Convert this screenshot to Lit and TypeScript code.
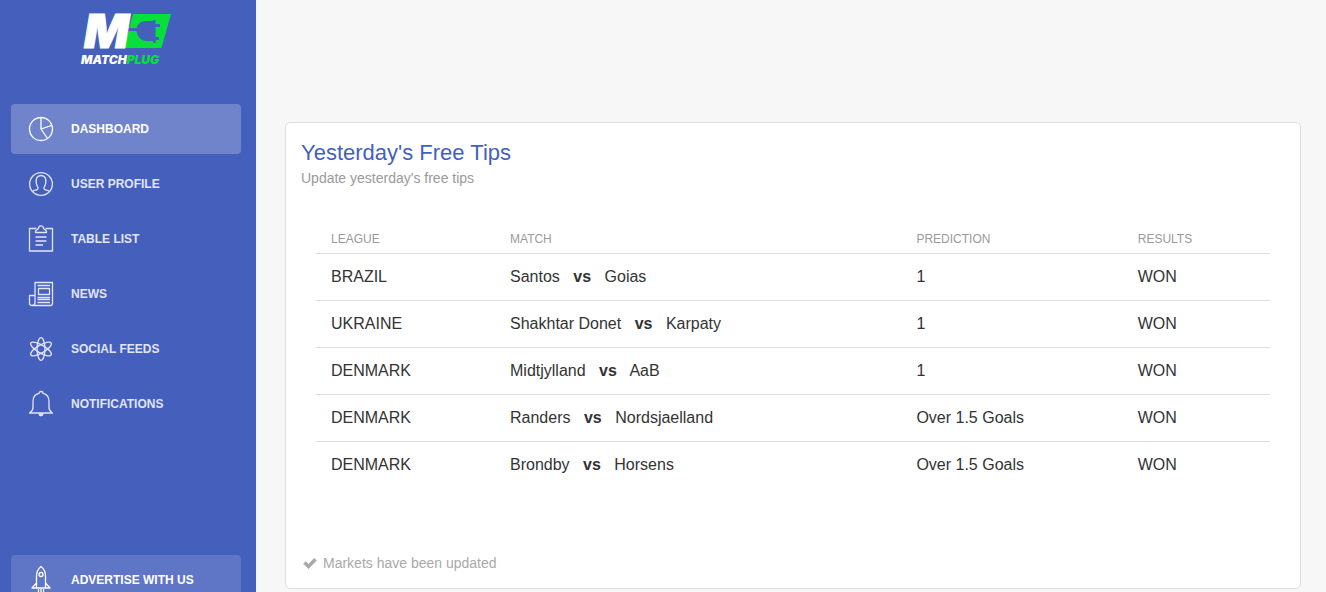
import { LitElement, html, svg, css } from "lit";
import { customElement } from "lit/decorators.js";

const icons = {
  dashboard: svg`<circle cx="15" cy="15" r="11.5"/><path d="M15 3.5V15l6.5 9.5M15 15l10.8-3.6"/>`,
  profile: svg`<circle cx="15" cy="15" r="11.4"/><path d="M6.500 22.500c1-1 2.500-1.200 4-1.700 1.200-.4 1.700-1 1.500-2-.2-1.300-1.300-2.200-1.700-4.500-.8-4.600.7-7.800 4.700-7.800s5.500 3.200 4.700 7.800c-.4 2.300-1.500 3.200-1.700 4.500-.2 1 .3 1.600 1.500 2 1.500.5 3 .7 4 1.700"/>`,
  table: svg`<path d="M10.500 4.500h-7v22.500h23V4.500h-7M9.500 8.500h11V7l-3-2.500c0-3.600-5-3.600-5 0L9.500 7zM9.500 13h11M9.500 17h11M9.500 21h7.500"/>`,
  news: svg`<path d="M9 24V3.500h17.500V24q0 2.500-2 2.500H6q-2.500 0-2.500-2.500V16.500H9V23.500q0 3-3 3M11.500 6.500H24M12.500 9.500h11v6h-11zM11.500 18.500H24M11.500 20.500H24M11.500 23.500H24"/>`,
  social: svg`<ellipse cx="15" cy="15" rx="3.900" ry="11.300"/><ellipse cx="15" cy="15" rx="3.900" ry="11.800" transform="rotate(60 15 15)"/><ellipse cx="15" cy="15" rx="3.900" ry="11.800" transform="rotate(-60 15 15)"/>`,
  bell: svg`<path d="M3.500 24c2.500-1.500 3.500-2.500 3.500-5.500v-6c0-4.500 2.500-7.500 6-8.200 0-2.400 4-2.400 4 0 3.500.7 6 3.700 6 8.200v6c0 3 1 4 3.500 5.500z"/><path class="solid" d="M12.500 24.500h5c0 3.800-5 3.800-5 0z"/>`,
  rocket: svg`<path d="M10.500 23v-11.500C10.500 7 12.500 3.500 15 1.500c2.500 2 4.500 5.500 4.500 10V23zM10.500 18l-4.500 5h4.500M19.500 18l4.500 5h-4.500M12.500 24v5M15 24v6M17.500 24v5"/><circle cx="15" cy="9.500" r="2"/>`,
};

const links = [
  { label: "Dashboard", icon: icons.dashboard, active: true },
  { label: "User Profile", icon: icons.profile },
  { label: "Table List", icon: icons.table },
  { label: "News", icon: icons.news },
  { label: "Social Feeds", icon: icons.social },
  { label: "Notifications", icon: icons.bell },
];

const tips = [
  ["BRAZIL", "Santos", "Goias", "1", "WON"],
  ["UKRAINE", "Shakhtar Donet", "Karpaty", "1", "WON"],
  ["DENMARK", "Midtjylland", "AaB", "1", "WON"],
  ["DENMARK", "Randers", "Nordsjaelland", "Over 1.5 Goals", "WON"],
  ["DENMARK", "Brondby", "Horsens", "Over 1.5 Goals", "WON"],
];

@customElement("side-nav")
class SideNav extends LitElement {
  static styles = css`
    :host {
      display: flex;
      flex-direction: column;
      box-sizing: border-box;
      flex: 0 0 256px;
      padding: 0 15px 0 11px;
      background: #455fbd;
      overflow: hidden;
    }
    .brand {
      display: block;
      height: 104px;
      flex: none;
    }
    .logo {
      display: block;
      width: 100px;
      height: 70px;
      margin: 0 auto;
    }
    .mark {
      font: italic 900 47px Inter, sans-serif;
      fill: #fff;
      stroke: #fff;
      stroke-width: 1;
    }
    .word {
      font: italic 900 12px Inter, sans-serif;
      fill: #fff;
    }
    .green {
      fill: #07df3b;
    }
    .cut {
      fill: #455fbd;
    }
    .list {
      list-style: none;
      margin: 0;
      padding: 0;
      display: flex;
      flex-direction: column;
      gap: 5px;
    }
    .link {
      display: flex;
      align-items: center;
      gap: 15px;
      box-sizing: border-box;
      height: 50px;
      padding: 0 15px;
      border-radius: 4px;
      color: #fff;
      font-size: 12px;
      font-weight: 700;
      line-height: 30px;
      text-transform: uppercase;
      text-decoration: none;
    }
    .text,
    .icon {
      opacity: 0.84;
    }
    .active {
      background: rgba(255, 255, 255, 0.23);
    }
    .active .text,
    .active .icon,
    .promo .text,
    .promo .icon {
      opacity: 1;
    }
    .promo {
      flex: none;
      margin: auto 0 -13px;
      background: rgba(255, 255, 255, 0.14);
    }
    .icon {
      width: 30px;
      height: 30px;
      fill: none;
      stroke: #fff;
      stroke-width: 1.3;
      stroke-linejoin: round;
    }
    .solid {
      fill: #fff;
      stroke: none;
    }
  `;

  render() {
    return html`
      <a class="brand" href="#" aria-label="MatchPlug">
        <svg class="logo" viewBox="0 0 100 70">
          <path class="green" d="M57 14h38l-9.500 34H48z" />
          <path
            class="cut"
            d="M50 28h10.500c1.500-4.500 5-7 10-7H77v-1h2.500v4H84v3h-4.500v10H83v3h-3.500v3H77v-2h-6.500c-5 0-9-3.500-10-10H50z"
          />
          <text class="mark" x="8" y="48">M</text>
          <text class="word" x="5" y="64">MATCH<tspan class="green">PLUG</tspan></text>
        </svg>
      </a>
      <nav>
        <ul class="list">
          ${links.map(
            (l) => html`<li>
              <a class="link ${l.active ? "active" : ""}" href="#">
                <svg class="icon" viewBox="0 0 30 30">${l.icon}</svg>
                <span class="text">${l.label}</span>
              </a>
            </li>`
          )}
        </ul>
      </nav>
      <a class="link promo" href="#">
        <svg class="icon" viewBox="0 0 30 30">${icons.rocket}</svg>
        <span class="text">Advertise with us</span>
      </a>
    `;
  }
}

@customElement("tips-card")
class TipsCard extends LitElement {
  static styles = css`
    :host {
      display: block;
      background: #fff;
      border: 1px solid #dedede;
      border-radius: 5px;
      padding: 15px 15px 14px;
    }
    .title {
      margin: 0;
      font-size: 22px;
      font-weight: 400;
      line-height: 30px;
      color: #455fbd;
    }
    .subtitle {
      margin: 0;
      font-size: 14px;
      line-height: 20px;
      color: #9a9a9a;
    }
    .content {
      padding: 35px 15px 0;
    }
    .table {
      width: 100%;
      border-collapse: collapse;
      table-layout: fixed;
      color: #333;
    }
    .table th,
    .table td {
      text-align: left;
      font-weight: 400;
      padding: 0 8px;
      box-sizing: border-box;
    }
    .table th {
      height: 30px;
      padding-top: 2px;
      font-size: 12px;
      color: #9a9a9a;
    }
    .table td {
      height: 47px;
      font-size: 16px;
      line-height: 20px;
      border-top: 1px solid #ddd;
    }
    .table th:first-child,
    .table td:first-child {
      padding-left: 15px;
    }
    .league {
      width: 19.5%;
    }
    .match {
      width: 42.6%;
    }
    .prediction {
      width: 23.2%;
    }
    .versus {
      margin: 0 9px;
    }
    .footer {
      display: flex;
      align-items: center;
      gap: 6px;
      margin-top: 64px;
      padding-left: 2px;
      font-size: 14px;
      line-height: 22px;
      color: #a9a9a9;
    }
    .check {
      width: 14px;
      height: 14px;
      fill: none;
      stroke: #a9a9a9;
      stroke-width: 3.5;
    }
  `;

  render() {
    return html`
      <h4 class="title">Yesterday's Free Tips</h4>
      <p class="subtitle">Update yesterday's free tips</p>
      <div class="content">
        <table class="table">
          <thead>
            <tr>
              <th class="league">LEAGUE</th>
              <th class="match">MATCH</th>
              <th class="prediction">PREDICTION</th>
              <th>RESULTS</th>
            </tr>
          </thead>
          <tbody>
            ${tips.map(
              ([league, home, away, prediction, result]) => html`<tr>
                <td>${league}</td>
                <td>${home} <b class="versus">vs</b> ${away}</td>
                <td>${prediction}</td>
                <td>${result}</td>
              </tr>`
            )}
          </tbody>
        </table>
      </div>
      <div class="footer">
        <svg class="check" viewBox="0 0 14 14"><path d="M1.500 6.500l4 4L12.500 3.300" /></svg>
        <span>Markets have been updated</span>
      </div>
    `;
  }
}

@customElement("app-root")
class AppRoot extends LitElement {
  static styles = css`
    :host {
      display: flex;
      height: 100vh;
      font-family: "Liberation Sans", Arial, sans-serif;
      background: #f7f7f7;
    }
    .main {
      flex: 1;
      min-width: 0;
      overflow: auto;
      box-sizing: border-box;
      padding: 122px 25px 0 29px;
    }
  `;

  render() {
    return html`
      <side-nav></side-nav>
      <main class="main"><tips-card></tips-card></main>
    `;
  }
}
